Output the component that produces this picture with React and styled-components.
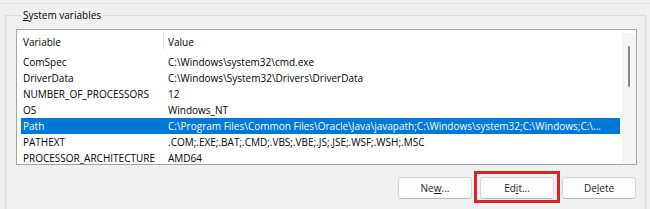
import React from "react";
import styled, { createGlobalStyle } from "styled-components";

const GlobalStyle = createGlobalStyle`
  html, body {
    margin: 0;
    padding: 0;
    background: #f0f0f0;
  }
  body {
    font-family: "Open Sans", "Noto Sans", "DejaVu Sans", sans-serif;
    font-size: 10px;
    color: #000;
  }
`;

const Page = styled.div`
  width: 650px;
  height: 209px;
  overflow: hidden;
  box-sizing: border-box;
  padding-top: 3px;
`;

const Panel = styled.div`
  border-top: 1px solid #e2e2e2;
  padding: 3px 4px 0 5px;
`;

const Group = styled.fieldset`
  margin: 0;
  padding: 0 8px 40px 10px;
  border: 1px solid #dcdcdc;
  min-width: 0;
`;

const Legend = styled.legend`
  padding: 0 2px;
  margin-left: 5px;
  line-height: 16px;
  color: #000;
`;

const Key = styled.span`
  text-decoration: underline;
  text-underline-offset: 1px;
`;

const ListBox = styled.div`
  margin-top: 6px;
  height: 136px;
  box-sizing: border-box;
  border: 1px solid #a3a3a3;
  background: #fff;
  display: flex;
  overflow: hidden;
`;

const Table = styled.div`
  flex: 1;
  min-width: 0;
  padding: 0 2px 0 4px;
  overflow: hidden;
`;

const HeaderRow = styled.div`
  display: grid;
  grid-template-columns: 142px 1fr;
  height: 24px;
`;

const HeaderCell = styled.div`
  margin-top: 2px;
  height: 18px;
  line-height: 20px;
  padding-left: ${(p) => (p.$divider ? "4px" : "2px")};
  border-left: ${(p) => (p.$divider ? "1px solid #e5e5e5" : "none")};
  color: #000;
`;

const Row = styled.div`
  display: grid;
  grid-template-columns: 142px 1fr;
  height: 16px;
  line-height: 16px;
  background: ${(p) => (p.$selected ? "#0078d7" : "transparent")};
  color: ${(p) => (p.$selected ? "#fff" : "#000")};
`;

const Cell = styled.div`
  padding-left: ${(p) => (p.$value ? "5px" : "2px")};
  white-space: nowrap;
  overflow: hidden;
  text-overflow: ellipsis;
`;

const ScrollTrack = styled.div`
  width: 14px;
  margin-top: 3px;
  background: #f5f5f5;
  display: flex;
  flex-direction: column;
  align-items: center;
  padding-top: 13px;
  box-sizing: border-box;
`;

const Thumb = styled.div`
  width: 2px;
  height: 41px;
  border-radius: 1px;
  background: #858585;
`;

const ButtonBar = styled.div`
  display: flex;
  justify-content: flex-end;
  align-items: flex-start;
  gap: 8px;
  margin-top: 12px;
  padding-right: 1px;
`;

const Button = styled.button`
  width: 74px;
  height: 22px;
  box-sizing: border-box;
  padding: 0;
  font: inherit;
  font-size: 10px;
  color: #1b1b1b;
  background: #fdfdfd;
  border: 1px solid #d3d3d3;
  border-bottom-color: #b9b9b9;
  border-radius: 4px;
  display: block;
`;

const Marker = styled.div`
  margin: -6px -6px -4px;
  padding: 3px 3px 1px;
  border: 3px solid #d8232a;
`;

const rows = [
  ["ComSpec", "C:\\Windows\\system32\\cmd.exe"],
  ["DriverData", "C:\\Windows\\System32\\Drivers\\DriverData"],
  ["NUMBER_OF_PROCESSORS", "12"],
  ["OS", "Windows_NT"],
  [
    "Path",
    "C:\\Program Files\\Common Files\\Oracle\\Java\\javapath;C:\\Windows\\system32;C:\\Windows;C:\\...",
    true,
  ],
  ["PATHEXT", ".COM;.EXE;.BAT;.CMD;.VBS;.VBE;.JS;.JSE;.WSF;.WSH;.MSC"],
  ["PROCESSOR_ARCHITECTURE", "AMD64"],
];

export default function App() {
  return (
    <>
      <GlobalStyle />
      <Page>
        <Panel>
          <Group>
            <Legend>
              <Key>S</Key>ystem variables
            </Legend>
            <ListBox>
              <Table>
                <HeaderRow>
                  <HeaderCell>Variable</HeaderCell>
                  <HeaderCell $divider>Value</HeaderCell>
                </HeaderRow>
                {rows.map(([name, value, selected]) => (
                  <Row key={name} $selected={selected}>
                    <Cell>{name}</Cell>
                    <Cell $value>{value}</Cell>
                  </Row>
                ))}
              </Table>
              <ScrollTrack>
                <Thumb />
              </ScrollTrack>
            </ListBox>
            <ButtonBar>
              <Button>
                Ne<Key>w</Key>...
              </Button>
              <Marker>
                <Button>
                  Ed<Key>i</Key>t...
                </Button>
              </Marker>
              <Button>
                De<Key>l</Key>ete
              </Button>
            </ButtonBar>
          </Group>
        </Panel>
      </Page>
    </>
  );
}
